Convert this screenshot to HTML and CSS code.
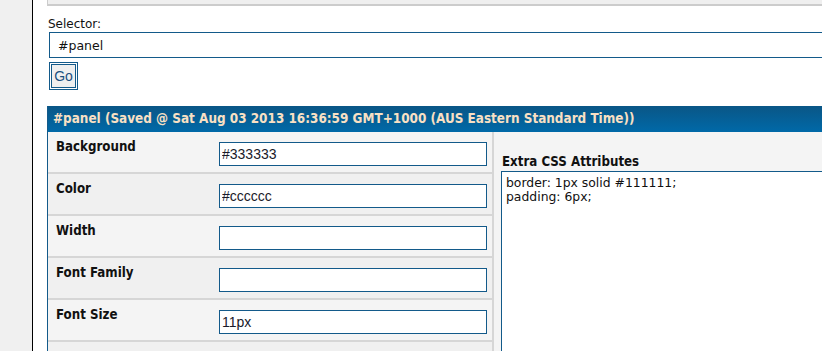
FILE: index.html
```html
<!DOCTYPE html>
<html>
<head>
<meta charset="utf-8">
<title>Panel editor</title>
<link rel="stylesheet" href="styles.css">
</head>
<body>
<div class="page">
  <aside class="strip"></aside>
  <main class="content">
    <div class="topbox"></div>
    <label class="sel-label" for="sel">Selector:</label>
    <input id="sel" class="sel-input" type="text" value="#panel">
    <button class="go" type="button">Go</button>
    <section class="panel">
      <div class="panel-head">#panel (Saved @ Sat Aug 03 2013 16:36:59 GMT+1000 (AUS Eastern Standard Time))</div>
      <div class="panel-body">
        <div class="fields">
          <div class="row odd"><span class="label">Background</span><input class="field" type="text" value="#333333"></div>
          <div class="row even"><span class="label">Color</span><input class="field" type="text" value="#cccccc"></div>
          <div class="row odd"><span class="label">Width</span><input class="field" type="text" value=""></div>
          <div class="row even"><span class="label">Font Family</span><input class="field" type="text" value=""></div>
          <div class="row odd"><span class="label">Font Size</span><input class="field" type="text" value="11px"></div>
          <div class="row even"></div>
        </div>
        <div class="extra">
          <div class="extra-label">Extra CSS Attributes</div>
          <textarea class="extra-text">border: 1px solid #111111;
padding: 6px;</textarea>
        </div>
      </div>
    </section>
  </main>
</div>
</body>
</html>
```
FILE: styles.css
```css
html, body {
  margin: 0;
  padding: 0;
  background: #ffffff;
}

.page {
  width: 822px;
  height: 351px;
  overflow: hidden;
  display: flex;
  font-family: "DejaVu Sans", Verdana, sans-serif;
}

.strip {
  flex: 0 0 32px;
  background: #f0f0f0;
  border-right: 1px solid #000000;
}

.content {
  flex: 0 0 820px;
  padding-left: 14px;
  display: flex;
  flex-direction: column;
  align-items: flex-start;
  background: #ffffff;
}

.content > * {
  flex-shrink: 0;
}

.topbox {
  width: 820px;
  height: 4px;
  background: #efefef;
  border-left: 1px solid #cccccc;
  border-bottom: 2px solid #cccccc;
}

.sel-label {
  margin-top: 10px;
  margin-left: 1px;
  font-size: 12px;
  line-height: 16px;
  color: #111111;
}

.sel-input {
  margin: 0 0 0 2px;
  width: 820px;
  height: 26px;
  box-sizing: border-box;
  border: 1px solid #135a8a;
  padding: 0 8px;
  font-family: "DejaVu Sans", Verdana, sans-serif;
  font-size: 12.5px;
  color: #111111;
  background: #ffffff;
  outline: none;
}

.go {
  margin: 4px 0 0 2px;
  width: 29px;
  height: 28px;
  box-sizing: border-box;
  padding: 0;
  border: 1px solid #135a8a;
  box-shadow: inset 0 0 0 1px #ffffff, inset 0 0 0 2px #135a8a;
  background: #efefef;
  font-family: "Liberation Sans", Arial, sans-serif;
  font-size: 14px;
  color: #1a4f7e;
}

.panel {
  margin-top: 16px;
  width: 820px;
  border-left: 1px solid #135a8a;
}

.panel-head {
  height: 26px;
  box-sizing: border-box;
  padding: 0 0 0 5px;
  background: linear-gradient(#0a5686, #0069a8);
  color: #f9e0c4;
  font-family: "DejaVu Sans Condensed", "DejaVu Sans", sans-serif;
  font-weight: bold;
  font-size: 13.4px;
  line-height: 26px;
  white-space: nowrap;
}

.panel-body {
  display: flex;
  align-items: stretch;
}

.fields {
  flex: 0 0 444px;
  display: flex;
  flex-direction: column;
  border-right: 2px solid #d6d6d6;
}

.row {
  height: 40px;
  flex-shrink: 0;
  border-bottom: 2px solid #d6d6d6;
  display: flex;
  align-items: flex-start;
}

.row.odd { background: #f4f4f4; }
.row.even { background: #f0f0f0; }

.label {
  flex: 0 0 163px;
  padding: 7px 0 0 8px;
  font-family: "DejaVu Sans Condensed", "DejaVu Sans", sans-serif;
  font-weight: bold;
  font-size: 13.2px;
  line-height: 16px;
  color: #111111;
}

.field {
  margin: 10px 0 0 0;
  width: 268px;
  height: 24px;
  flex-shrink: 0;
  box-sizing: border-box;
  border: 1px solid #135a8a;
  padding: 0 2px;
  font-family: "Liberation Sans", Arial, sans-serif;
  font-size: 14px;
  color: #1a1a2a;
  background: #ffffff;
  outline: none;
}

.extra {
  flex: 1 1 auto;
  background: #f4f4f4;
  padding: 22px 0 0 7px;
  display: flex;
  flex-direction: column;
}

.extra-label {
  margin-left: 1px;
  font-family: "DejaVu Sans Condensed", "DejaVu Sans", sans-serif;
  font-weight: bold;
  font-size: 13.2px;
  line-height: 16px;
  color: #111111;
}

.extra-text {
  margin-top: 1px;
  width: 400px;
  height: 260px;
  flex-shrink: 0;
  box-sizing: border-box;
  border: 1px solid #135a8a;
  padding: 4px 4px;
  font-family: "DejaVu Sans", Verdana, sans-serif;
  font-size: 12.4px;
  line-height: 14px;
  color: #111111;
  background: #ffffff;
  resize: none;
  outline: none;
}
```
